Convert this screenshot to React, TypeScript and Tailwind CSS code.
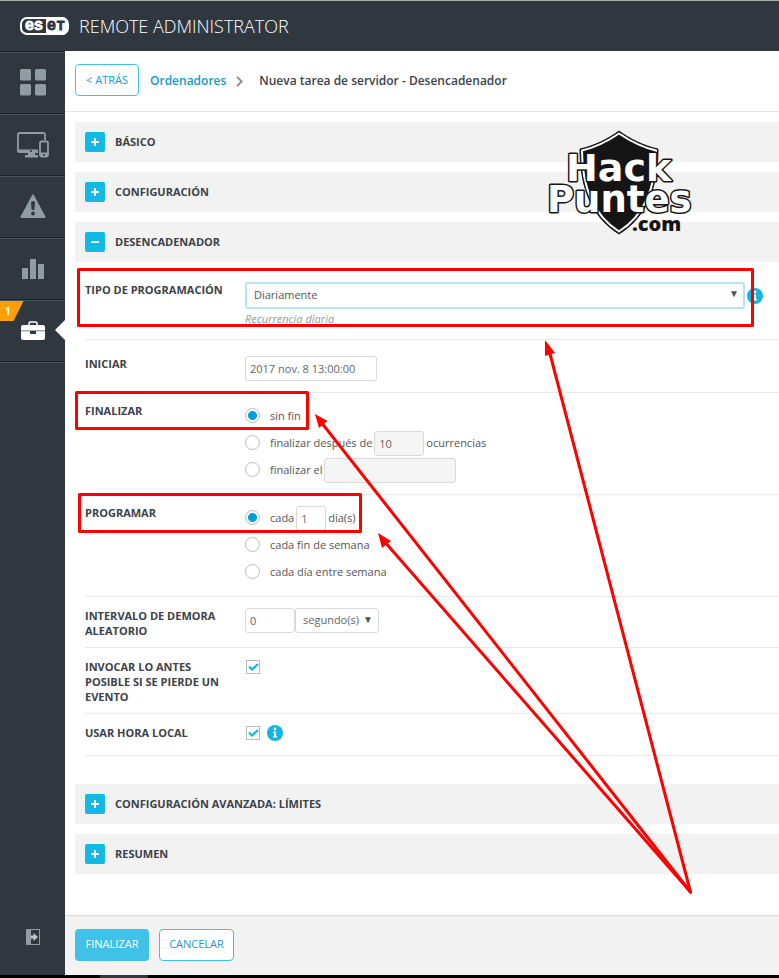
import { useId, type ReactNode } from "react";

function EsetLogo() {
  return (
    <svg width="50" height="20" viewBox="0 0 50 20" role="img" aria-label="ESET">
      <rect x="1" y="2" width="47" height="16" rx="6" fill="none" stroke="#fff" strokeWidth="2" />
      <path d="M26 1h16a6 6 0 0 1 6 6v6a6 6 0 0 1-6 6H26z" fill="#fff" />
      <text x="5" y="14" fontFamily="Liberation Sans, sans-serif" fontWeight="700" fontSize="16" fill="#fff" stroke="#fff" strokeWidth="0.8">es</text>
      <text x="27" y="14" fontFamily="Liberation Sans, sans-serif" fontWeight="700" fontSize="16" fill="#30373f" stroke="#30373f" strokeWidth="0.8">e</text>
      <text x="37" y="14" fontFamily="Liberation Sans, sans-serif" fontWeight="700" fontSize="12" fill="#30373f" stroke="#30373f" strokeWidth="1">T</text>
    </svg>
  );
}

function HackPuntesLogo() {
  return (
    <svg width="156" height="116" viewBox="0 0 156 116" role="img" aria-label="HackPuntes.com">
      <path
        d="M73 2C62 10 48 17 34 20C34 52 42 86 73 105C104 86 112 52 112 20C98 17 84 10 73 2Z"
        fill="#151515" stroke="#151515" strokeWidth="1"
      />
      <path
        d="M73 4.500C62 12 49 18.500 36 21.500C36 52 44 84 73 102.500C102 84 110 52 110 21.500C97 18.500 84 12 73 4.500Z"
        fill="none" stroke="#fff" strokeWidth="2"
      />
      <g fontFamily="DejaVu Sans, sans-serif" fontWeight="700" fill="#fff" stroke="#151515" strokeWidth="3" paintOrder="stroke" strokeLinejoin="round">
        <text x="20" y="52" fontSize="38">Hack</text>
        <text x="1" y="83" fontSize="37">Puntes</text>
      </g>
      <text x="86" y="102" fontFamily="Open Sans, sans-serif" fontWeight="800" fontSize="20" fill="#151515" stroke="#f2f2f2" strokeWidth="1" paintOrder="stroke">.com</text>
    </svg>
  );
}

function DashboardIcon() {
  return (
    <svg width="26" height="27" viewBox="0 0 26 27" fill="#919ba3">
      <rect width="11" height="11.500" rx="1.500" />
      <rect x="15" width="11" height="11.500" rx="1.500" />
      <rect y="15" width="11" height="11.500" rx="1.500" />
      <rect x="15" y="15" width="11" height="11.500" rx="1.500" />
    </svg>
  );
}

function DevicesIcon() {
  return (
    <svg width="32" height="26" viewBox="0 0 32 26">
      <path d="M28 8V2.500a1.500 1.500 0 0 0-1.500-1.500h-24A1.500 1.500 0 0 0 1 2.500v17" fill="none" stroke="#919ba3" strokeWidth="1.800" />
      <path d="M.3 17.500H21V21H2a1.700 1.700 0 0 1-1.700-1.700z" fill="#919ba3" />
      <path d="M11 21h7v2h3v2.500H8V23h3z" fill="#919ba3" />
      <circle cx="14" cy="19" r="1" fill="#30373f" />
      <rect x="23" y="9.500" width="8" height="15" rx="1.500" fill="none" stroke="#919ba3" strokeWidth="1.800" />
      <path d="M23 20.500h8V24a1 1 0 0 1-1 1h-6a1 1 0 0 1-1-1z" fill="#919ba3" />
      <circle cx="27" cy="23" r="1" fill="#30373f" />
    </svg>
  );
}

function WarningIcon() {
  return (
    <svg width="26" height="25" viewBox="0 0 26 25">
      <path d="M13 1.500 24.500 23h-23z" fill="#919ba3" stroke="#919ba3" strokeWidth="2" strokeLinejoin="round" />
      <path d="M11 9a2 2 0 0 1 4 0l-.7 7h-2.600z" fill="#30373f" />
      <circle cx="13" cy="19.500" r="1.900" fill="#30373f" />
    </svg>
  );
}

function ChartIcon() {
  return (
    <svg width="22" height="20" viewBox="0 0 22 20" fill="#919ba3">
      <rect y="9" width="6" height="11" rx=".5" />
      <rect x="8" width="6" height="20" rx=".5" />
      <rect x="16" y="5" width="6" height="15" rx=".5" />
    </svg>
  );
}

function BriefcaseIcon() {
  return (
    <svg width="24" height="19" viewBox="0 0 24 19">
      <path d="M8 4V2.500A1.500 1.500 0 0 1 9.500 1h5A1.500 1.500 0 0 1 16 2.500V4" fill="none" stroke="#fff" strokeWidth="1.500" />
      <path d="M2 4h20a2 2 0 0 1 2 2v3H0V6a2 2 0 0 1 2-2z" fill="#fff" />
      <path d="M0 10h24v7a2 2 0 0 1-2 2H2a2 2 0 0 1-2-2z" fill="#fff" />
      <path d="M0 9h24v1.500H0z" fill="#a3a9ae" />
      <rect x="9" y="10" width="6" height="3" fill="#30373f" />
    </svg>
  );
}

function ExpandIcon() {
  return (
    <svg width="14" height="16" viewBox="0 0 14 16">
      <rect x=".5" y=".5" width="13" height="15" fill="none" stroke="#919ba3" />
      <rect width="5" height="16" fill="#919ba3" />
      <path d="M5 6.500h2.500V4L12 8l-4.500 4V9.500H5z" fill="#c0c6ca" />
    </svg>
  );
}

function InfoIcon() {
  return (
    <svg className="shrink-0" width="16" height="16" viewBox="0 0 16 16" role="img" aria-label="Información">
      <circle cx="8" cy="8" r="8" fill="#11b6e2" />
      <circle cx="8" cy="4" r="1.400" fill="#fff" />
      <path d="M6 6.500h3V11h1v1.500H6V11h1V8H6z" fill="#fff" />
    </svg>
  );
}

function NavItem({ label, active, children }: { label: string; active?: boolean; children: ReactNode }) {
  return (
    <a
      href="#"
      aria-label={label}
      className="relative flex h-[62px] items-center justify-center border-t border-t-[#1d2228] shadow-[inset_0_1px_0_#4a5158]"
    >
      {children}
      {active && (
        <>
          <svg className="absolute top-px left-0" width="24" height="20" viewBox="0 0 24 20">
            <path d="M0 0h23.500L13.500 20H0z" fill="#ffa000" />
            <text x="5" y="14" fontFamily="Open Sans, sans-serif" fontWeight="700" fontSize="10" fill="#fff">1</text>
          </svg>
          <svg className="absolute top-5 right-0" width="10" height="20" viewBox="0 0 10 20">
            <path d="M10 0v20L0 10z" fill="#fff" />
          </svg>
        </>
      )}
    </a>
  );
}

function Section({ title, open }: { title: string; open?: boolean }) {
  return (
    <h2 className="bg-[#f2f2f2]">
      <button type="button" aria-expanded={!!open} className="flex h-10 w-full items-center gap-2.5 px-2.5 text-left text-[11px] font-bold text-[#3c4248]">
        <svg width="20" height="20" viewBox="0 0 20 20">
          <rect width="20" height="20" rx="2" fill="#11b9e4" />
          <path d={open ? "M6 10h8" : "M6 10h8M10 6v8"} stroke="#fff" strokeWidth="2" />
        </svg>
        {title}
      </button>
    </h2>
  );
}

function Row({ label, htmlFor, className, children }: { label: string; htmlFor?: string; className: string; children: ReactNode }) {
  const style = "w-[140px] shrink-0 text-[11px] leading-[15px] font-bold text-[#3c4248]";
  return (
    <div className={`ml-2.5 flex gap-5 border-b border-[#e8e8e8] ${className}`}>
      {htmlFor ? <label htmlFor={htmlFor} className={style}>{label}</label> : <div className={style}>{label}</div>}
      <div className="min-w-0 flex-1">{children}</div>
    </div>
  );
}

const field = "h-[25px] rounded-[3px] border border-[#d9d9d9] px-1 text-[11px] text-[#666]";

function Radio({ name, checked, text, children }: { name: string; checked?: boolean; text: string; children?: ReactNode }) {
  const id = useId();
  return (
    <div className="flex h-[27px] items-center text-[11px] text-[#555]">
      <input
        id={id}
        type="radio"
        name={name}
        defaultChecked={checked}
        className="mr-2.5 mb-0.5 size-[15px] appearance-none rounded-full border border-[#bbb] bg-white checked:bg-[radial-gradient(circle,#009fda_4px,white_5px)]"
      />
      <label htmlFor={id}>{text}</label>
      {children}
    </div>
  );
}

function Check({ id }: { id: string }) {
  return (
    <span className="grid size-4 place-items-center">
      <input id={id} type="checkbox" defaultChecked className="peer col-start-1 row-start-1 size-[14px] appearance-none border border-[#bbb] bg-white" />
      <svg className="pointer-events-none col-start-1 row-start-1 hidden peer-checked:block" width="12" height="10" viewBox="0 0 12 10">
        <path d="M2 4.500 5 7.500 11 2" fill="none" stroke="#11b6e2" strokeWidth="2.200" />
      </svg>
    </span>
  );
}

function Arrow({ d, head }: { d: string; head: string }) {
  return (
    <>
      <path d={d} stroke="#f00" strokeWidth="3" fill="none" strokeLinecap="round" />
      <path d={head} fill="#f00" />
    </>
  );
}

function Annotations() {
  return (
    <svg className="pointer-events-none absolute top-0 left-0" width="779" height="978" viewBox="0 0 779 978">
      <g fill="none" stroke="#f00" strokeWidth="3" strokeLinejoin="round">
        <rect x="78.500" y="269.500" width="674" height="56" />
        <rect x="76.500" y="392.500" width="231" height="36" />
        <rect x="79.500" y="494.500" width="281" height="37" />
      </g>
      <Arrow d="M690.500 892 549 350" head="M545 340 555 353 545 356Z" />
      <Arrow d="M690.500 892 321 422" head="M315 414 327.500 421 319 428Z" />
      <Arrow d="M690.500 892 384 541" head="M378 533 391 541 382 548Z" />
    </svg>
  );
}

export default function App() {
  return (
    <div className="relative flex min-h-screen flex-col overflow-hidden bg-white font-['Open_Sans','Noto_Sans',sans-serif]">
      <header className="flex h-[51px] items-center gap-[9px] border-t border-[#a8abae] bg-[#30373f] pl-5">
        <EsetLogo />
        <span className="text-[18px] font-light text-white">REMOTE ADMINISTRATOR</span>
      </header>

      <div className="flex flex-1">
        <nav className="flex w-[65px] shrink-0 flex-col bg-[#30373f]">
          <NavItem label="Panel"><DashboardIcon /></NavItem>
          <NavItem label="Ordenadores"><DevicesIcon /></NavItem>
          <NavItem label="Amenazas"><WarningIcon /></NavItem>
          <NavItem label="Informes"><ChartIcon /></NavItem>
          <NavItem label="Administrador" active><BriefcaseIcon /></NavItem>
          <div className="flex flex-1 items-end justify-center border-t border-t-[#1d2228] pb-[30px] shadow-[inset_0_1px_0_#4a5158]">
            <button type="button" aria-label="Expandir"><ExpandIcon /></button>
          </div>
        </nav>

        <main className="flex min-w-0 flex-1 flex-col">
          <div className="flex h-[61px] items-center border-b border-[#e3e3e3] pl-2.5 text-[12px]">
            <button type="button" className="mb-0.5 h-8 w-16 rounded-[4px] border border-[#40c1e8] text-[11px] text-[#0e9bd1]">&lt; ATRÁS</button>
            <a href="#" className="ml-[11px] font-semibold text-[#0e9bd1]">Ordenadores</a>
            <svg className="mr-4 ml-2.5" width="7" height="11" viewBox="0 0 7 11">
              <path d="M1 .8 5.700 5.500 1 10.200" fill="none" stroke="#888" strokeWidth="1.800" />
            </svg>
            <h1 className="font-semibold text-[#3c4248]">Nueva tarea de servidor - Desencadenador</h1>
          </div>

          <form className="flex flex-1 flex-col" onSubmit={(e) => e.preventDefault()}>
            <div className="flex flex-col gap-2.5 pt-2.5 pl-2.5">
              <Section title="BÁSICO" />
              <Section title="CONFIGURACIÓN" />
              <Section title="DESENCADENADOR" open />
            </div>

            <div className="pl-2.5">
              <Row label="TIPO DE PROGRAMACIÓN" htmlFor="tipo" className="pt-5 pb-3">
                <div className="flex items-center gap-0.5">
                  <div className="relative max-w-[500px] flex-1">
                    <select id="tipo" className="block h-[27px] w-full appearance-none rounded-[3px] border-2 border-[#b5e4f2] bg-white px-[7px] text-[11px] text-[#555]">
                      <option>Diariamente</option>
                    </select>
                    <span className="pointer-events-none absolute top-1 right-1.5 text-[10px] text-[#555]">▼</span>
                  </div>
                  <InfoIcon />
                </div>
                <p className="mt-0.5 text-[11px] leading-4 text-[#999] italic">Recurrencia diaria</p>
              </Row>
              <Row label="INICIAR" htmlFor="iniciar" className="pt-4 pb-[11px]">
                <input id="iniciar" defaultValue="2017 nov. 8 13:00:00" className={`block w-[132px] ${field}`} />
              </Row>
              <Row label="FINALIZAR" className="py-2.5">
                <Radio name="fin" checked text="sin fin" />
                <Radio name="fin" text="finalizar después de">
                  <input aria-label="Ocurrencias" defaultValue="10" className={`mx-0.5 w-[50px] bg-[#f5f5f5] ${field}`} />
                  ocurrencias
                </Radio>
                <Radio name="fin" text="finalizar el">
                  <input aria-label="Fecha de fin" className={`mx-0.5 w-[132px] bg-[#f5f5f5] ${field}`} />
                </Radio>
              </Row>
              <Row label="PROGRAMAR" className="py-2.5">
                <Radio name="prog" checked text="cada">
                  <input aria-label="Número de días" defaultValue="1" className={`mx-0.5 w-[30px] ${field}`} />
                  día(s)
                </Radio>
                <Radio name="prog" text="cada fin de semana" />
                <Radio name="prog" text="cada día entre semana" />
              </Row>
              <Row label="INTERVALO DE DEMORA ALEATORIO" htmlFor="demora" className="pt-[11px] pb-[9px]">
                <div className="flex">
                  <input id="demora" defaultValue="0" className={`w-[50px] ${field}`} />
                  <div className="relative">
                    <select aria-label="Unidad" className={`block w-[84px] appearance-none bg-white pl-[7px] ${field}`}>
                      <option>segundo(s)</option>
                    </select>
                    <span className="pointer-events-none absolute top-1 right-1.5 text-[10px] text-[#555]">▼</span>
                  </div>
                </div>
              </Row>
              <Row label="INVOCAR LO ANTES POSIBLE SI SE PIERDE UN EVENTO" htmlFor="invocar" className="pt-[11px] pb-[9px]">
                <Check id="invocar" />
              </Row>
              <Row label="USAR HORA LOCAL" htmlFor="local" className="pt-[11px] pb-3.5">
                <div className="flex items-center gap-1.5">
                  <Check id="local" />
                  <InfoIcon />
                </div>
              </Row>
            </div>

            <div className="flex flex-col gap-2.5 pt-7 pb-10 pl-2.5">
              <Section title="CONFIGURACIÓN AVANZADA: LÍMITES" />
              <Section title="RESUMEN" />
            </div>

            <footer className="mt-auto flex h-[60px] items-center gap-2.5 border-t border-[#d8d8d8] bg-[#f2f2f2] pl-2.5 text-[11px]">
              <button type="submit" className="mb-0.5 h-8 w-[74px] rounded-[4px] bg-[#40c1e8] text-white">FINALIZAR</button>
              <button type="button" className="mb-0.5 h-8 w-[75px] rounded-[4px] border border-[#40c1e8] bg-white text-[#0e9bd1]">CANCELAR</button>
            </footer>
          </form>
        </main>
      </div>

      <div className="h-[3px] bg-black pl-[100px]">
        <div className="h-full w-12 bg-[#30373f]" />
      </div>

      <div className="pointer-events-none absolute top-[129px] left-[546px]">
        <HackPuntesLogo />
      </div>
      <Annotations />
    </div>
  );
}
